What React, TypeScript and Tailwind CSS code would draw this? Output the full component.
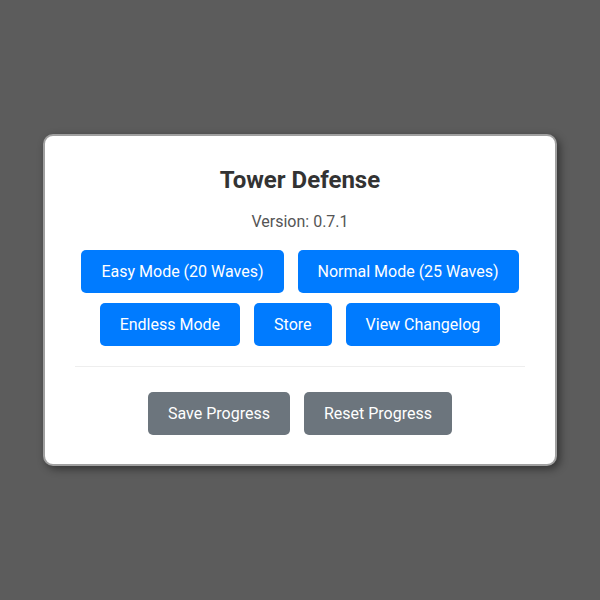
import React from 'react';

const blueButtons = [
  ['Easy Mode (20 Waves)', 'Normal Mode (25 Waves)'],
  ['Endless Mode', 'Store', 'View Changelog'],
];

const App: React.FC = () => {
  return (
    <div
      className="w-[600px] h-[600px] bg-[#5c5c5c] flex items-center justify-center"
      style={{ fontFamily: 'Roboto, "Liberation Sans", sans-serif' }}
    >
      {/* Main menu card */}
      <div className="w-[514px] bg-white border-2 border-[#a0a0a0] rounded-[10px] shadow-[3px_3px_8px_rgba(0,0,0,0.45)] px-[30px] pt-[30px] pb-[29px] text-center">
        <h1 className="text-[24px] leading-[28px] font-bold text-[#333333]">Tower Defense</h1>
        <p className="mt-[18px] text-[16px] leading-[19px] text-[#555555]">Version: 0.7.1</p>

        <div className="mt-[19px] flex flex-col gap-[10px]">
          {blueButtons.map((row, i) => (
            <div key={i} className="flex justify-center gap-[14px]">
              {row.map((label) => (
                <button
                  key={label}
                  className="bg-[#007bff] text-white text-[16px] leading-[19px] px-5 py-3 rounded-[5px]"
                >
                  {label}
                </button>
              ))}
            </div>
          ))}
        </div>

        <hr className="mt-[20px] border-0 border-t border-[#eeeeee]" />

        <div className="mt-[25px] flex justify-center gap-[14px]">
          <button className="bg-[#6c757d] text-white text-[16px] leading-[19px] px-5 py-3 rounded-[5px]">
            Save Progress
          </button>
          <button className="bg-[#6c757d] text-white text-[16px] leading-[19px] px-5 py-3 rounded-[5px]">
            Reset Progress
          </button>
        </div>
      </div>
    </div>
  );
};

export default App;
